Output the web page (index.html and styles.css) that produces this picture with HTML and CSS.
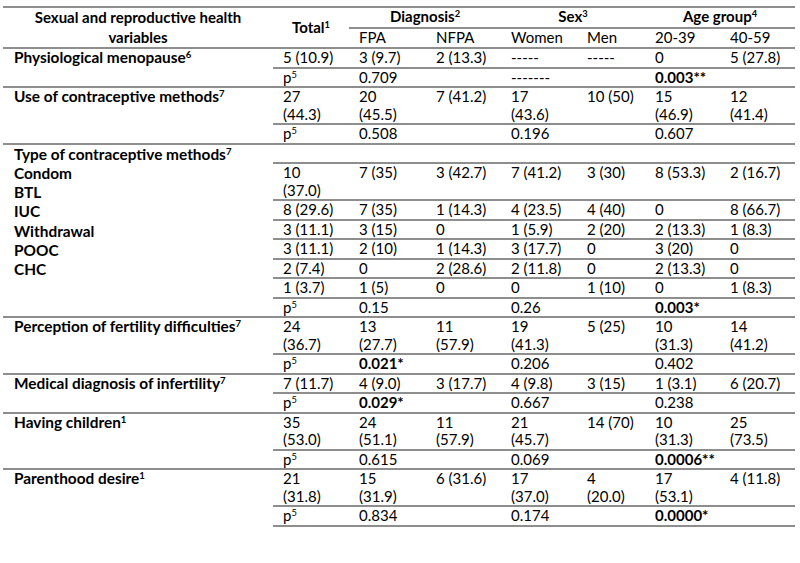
FILE: index.html
```html
<!DOCTYPE html>
<html lang="en">
<head>
<meta charset="utf-8">
<title>Sexual and reproductive health variables</title>
<link rel="stylesheet" href="styles.css">
</head>
<body>
<table class="tbl">
  <colgroup>
    <col class="c-label"><col class="c-total"><col class="c-fpa"><col class="c-nfpa"><col class="c-women"><col class="c-men"><col class="c-a1"><col class="c-a2">
  </colgroup>
  <thead>
    <tr>
      <th rowspan="2" class="h-label">Sexual and reproductive health<br>variables</th>
      <th rowspan="2" class="h-total">Total<sup>1</sup></th>
      <th colspan="2" class="h-grp">Diagnosis<sup>2</sup></th>
      <th colspan="2" class="h-grp">Sex<sup>3</sup></th>
      <th colspan="2" class="h-grp">Age group<sup>4</sup></th>
    </tr>
    <tr>
      <th>FPA</th><th>NFPA</th><th>Women</th><th>Men</th><th>20-39</th><th>40-59</th>
    </tr>
  </thead>
  <tbody>
    <tr>
      <td rowspan="2" class="lab">Physiological menopause<sup>6</sup></td>
      <td>5 (10.9)</td><td>3 (9.7)</td><td>2 (13.3)</td><td>-----</td><td>-----</td><td>0</td><td>5 (27.8)</td>
    </tr>
    <tr>
      <td>p<sup>5</sup></td><td>0.709</td><td></td><td>-------</td><td></td><td class="b">0.003**</td><td></td>
    </tr>
    <tr>
      <td rowspan="2" class="lab">Use of contraceptive methods<sup>7</sup></td>
      <td>27<br>(44.3)</td><td>20<br>(45.5)</td><td>7 (41.2)</td><td>17<br>(43.6)</td><td>10 (50)</td><td>15<br>(46.9)</td><td>12<br>(41.4)</td>
    </tr>
    <tr>
      <td>p<sup>5</sup></td><td>0.508</td><td></td><td>0.196</td><td></td><td>0.607</td><td></td>
    </tr>
    <tr class="blank">
      <td rowspan="8" class="lab lab-list">Type of contraceptive methods<sup>7</sup><br>Condom<br>BTL<br>IUC<br>Withdrawal<br>POOC<br>CHC</td>
      <td></td><td></td><td></td><td></td><td></td><td></td><td></td>
    </tr>
    <tr>
      <td>10<br>(37.0)</td><td>7 (35)</td><td>3 (42.7)</td><td>7 (41.2)</td><td>3 (30)</td><td>8 (53.3)</td><td>2 (16.7)</td>
    </tr>
    <tr>
      <td>8 (29.6)</td><td>7 (35)</td><td>1 (14.3)</td><td>4 (23.5)</td><td>4 (40)</td><td>0</td><td>8 (66.7)</td>
    </tr>
    <tr>
      <td>3 (11.1)</td><td>3 (15)</td><td>0</td><td>1 (5.9)</td><td>2 (20)</td><td>2 (13.3)</td><td>1 (8.3)</td>
    </tr>
    <tr>
      <td>3 (11.1)</td><td>2 (10)</td><td>1 (14.3)</td><td>3 (17.7)</td><td>0</td><td>3 (20)</td><td>0</td>
    </tr>
    <tr>
      <td>2 (7.4)</td><td>0</td><td>2 (28.6)</td><td>2 (11.8)</td><td>0</td><td>2 (13.3)</td><td>0</td>
    </tr>
    <tr>
      <td>1 (3.7)</td><td>1 (5)</td><td>0</td><td>0</td><td>1 (10)</td><td>0</td><td>1 (8.3)</td>
    </tr>
    <tr>
      <td>p<sup>5</sup></td><td>0.15</td><td></td><td>0.26</td><td></td><td class="b">0.003*</td><td></td>
    </tr>
    <tr>
      <td rowspan="2" class="lab">Perception of fertility difficulties<sup>7</sup></td>
      <td>24<br>(36.7)</td><td>13<br>(27.7)</td><td>11<br>(57.9)</td><td>19<br>(41.3)</td><td>5 (25)</td><td>10<br>(31.3)</td><td>14<br>(41.2)</td>
    </tr>
    <tr>
      <td>p<sup>5</sup></td><td class="b">0.021*</td><td></td><td>0.206</td><td></td><td>0.402</td><td></td>
    </tr>
    <tr>
      <td rowspan="2" class="lab">Medical diagnosis of infertility<sup>7</sup></td>
      <td>7 (11.7)</td><td>4 (9.0)</td><td>3 (17.7)</td><td>4 (9.8)</td><td>3 (15)</td><td>1 (3.1)</td><td>6 (20.7)</td>
    </tr>
    <tr>
      <td>p<sup>5</sup></td><td class="b">0.029*</td><td></td><td>0.667</td><td></td><td>0.238</td><td></td>
    </tr>
    <tr>
      <td rowspan="2" class="lab">Having children<sup>1</sup></td>
      <td>35<br>(53.0)</td><td>24<br>(51.1)</td><td>11<br>(57.9)</td><td>21<br>(45.7)</td><td>14 (70)</td><td>10<br>(31.3)</td><td>25<br>(73.5)</td>
    </tr>
    <tr>
      <td>p<sup>5</sup></td><td>0.615</td><td></td><td>0.069</td><td></td><td class="b">0.0006**</td><td></td>
    </tr>
    <tr>
      <td rowspan="2" class="lab">Parenthood desire<sup>1</sup></td>
      <td>21<br>(31.8)</td><td>15<br>(31.9)</td><td>6 (31.6)</td><td>17<br>(37.0)</td><td>4<br>(20.0)</td><td>17<br>(53.1)</td><td>4 (11.8)</td>
    </tr>
    <tr class="last">
      <td>p<sup>5</sup></td><td>0.834</td><td></td><td>0.174</td><td></td><td class="b">0.0000*</td><td></td>
    </tr>
  </tbody>
</table>
</body>
</html>
```

FILE: styles.css
```css
html, body {
  margin: 0;
  padding: 0;
  background: #ffffff;
}

body {
  font-family: Lato, "Liberation Sans", "DejaVu Sans", sans-serif;
  font-size: 15px;
  color: #000000;
}

.tbl {
  border-collapse: collapse;
  table-layout: fixed;
  width: 792px;
  margin: 6px 0 0 3px;
}

.c-label { width: 270px; }
.c-total { width: 76px; }
.c-fpa { width: 77px; }
.c-nfpa { width: 75px; }
.c-women { width: 76px; }
.c-men { width: 68px; }
.c-a1 { width: 75px; }
.c-a2 { width: 75px; }

.tbl th,
.tbl td {
  padding: 0 0 0 10px;
  border-top: 2px solid #8e8e8e;
  line-height: 17.5px;
  vertical-align: top;
  text-align: left;
  white-space: nowrap;
  font-weight: normal;
}

.tbl .h-label {
  font-weight: bold;
  text-align: center;
  vertical-align: middle;
  line-height: 19.5px;
  padding: 0;
}

.tbl .h-total {
  font-weight: bold;
  text-align: center;
  vertical-align: middle;
  padding: 0;
}

.tbl .h-grp {
  font-weight: bold;
  text-align: center;
  padding: 0;
}

.tbl .lab {
  font-weight: bold;
  font-size: 15.4px;
  padding-left: 11px;
}

.tbl .lab-list {
  line-height: 19.3px;
}

.tbl .blank td {
  height: 17.5px;
}

.tbl .b {
  font-weight: bold;
}

.tbl tr.last td {
  border-bottom: 2px solid #8e8e8e;
}

sup {
  font-size: 0.62em;
  line-height: 0;
  vertical-align: 0.5em;
}
```
